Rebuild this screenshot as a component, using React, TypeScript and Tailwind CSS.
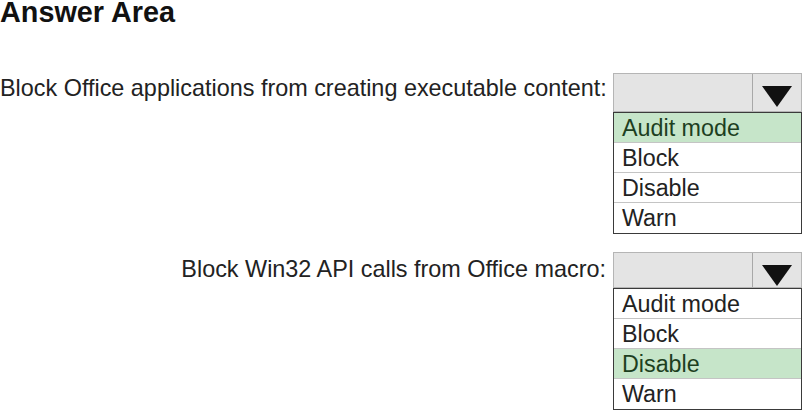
import React from "react";

type Props = { label: string; selected: string; boxH: string; labelPad: string; triTop: string };

const options = ["Audit mode", "Block", "Disable", "Warn"];

function Row({ label, selected, boxH, labelPad, triTop }: Props) {
  return (
    <div className="flex items-start">
      <div
        className={`w-[613px] shrink-0 whitespace-nowrap pr-[7px] text-right text-[23.4px] leading-[28px] text-[#222] ${labelPad}`}
      >
        {label}
      </div>
      <div className="w-[189px] shrink-0">
        <div className={`flex border border-[#b5b5b5] bg-[#e4e4e4] ${boxH}`}>
          <div className="flex-1 border-r border-[#a8a8a8]" />
          <div className={`flex w-[48px] justify-center ${triTop}`}>
            <svg width="30" height="21" viewBox="0 0 30 21">
              <polygon points="0,0 30,0 15,21" fill="#111" />
            </svg>
          </div>
        </div>
        <div className="border border-[#3a3a3a] bg-white">
          {options.map((o, i) => (
            <div
              key={o}
              className={`h-[30px] pl-[8px] text-[23.3px] leading-[30px] ${
                i < options.length - 1 ? "border-b border-[#c4c4c4]" : ""
              } ${o === selected ? "bg-[#c6e5c9] text-[#1d3f1f]" : "text-[#222]"}`}
            >
              {o}
            </div>
          ))}
        </div>
      </div>
    </div>
  );
}

export default function App() {
  return (
    <div
      className="h-[413px] w-[803px] overflow-hidden bg-white"
      style={{ fontFamily: '"Liberation Sans", Arial, sans-serif' }}
    >
      <div className="-mt-[2px] text-[28.8px] font-bold leading-[28px] text-[#111]">Answer Area</div>
      <div className="mt-[47px]">
        <Row
          label="Block Office applications from creating executable content:"
          selected="Audit mode"
          boxH="h-[39px]"
          labelPad="pt-[1px]"
          triTop="pt-[12px]"
        />
      </div>
      <div className="mt-[18px]">
        <Row
          label="Block Win32 API calls from Office macro:"
          selected="Disable"
          boxH="h-[36px]"
          labelPad="pt-[3px]"
          triTop="pt-[12px]"
        />
      </div>
    </div>
  );
}
